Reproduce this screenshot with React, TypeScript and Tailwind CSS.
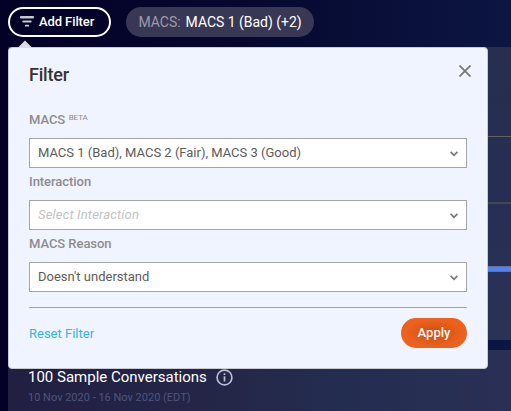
import React from "react";

function Chevron() {
  return (
    <svg width="8" height="6" viewBox="0 0 8 6" className="mt-[2px] shrink-0" fill="none" stroke="#777777" strokeWidth="1.7">
      <path d="M0.6 0.8 4 4.3 7.4 0.8" />
    </svg>
  );
}

type FieldProps = { label: React.ReactNode; children: React.ReactNode };

function Field({ label, children }: FieldProps) {
  return (
    <div className="flex h-[62px] flex-col">
      <div className="flex h-8 items-start pt-[6px] text-[13px] leading-4 font-medium tracking-[-0.05px] text-[#8c8c8e]">{label}</div>
      <div className="flex h-[30px] items-center justify-between border border-[#a2a4a8] bg-white pr-2 pl-2 text-[13px] leading-4 text-[#5c5c5c]">
        {children}
        <Chevron />
      </div>
    </div>
  );
}

function FilterPanel() {
  return (
    <section className="absolute top-[47px] left-2 flex h-[322px] w-[480px] flex-col rounded-[4px] border border-[#c9cbd0] bg-[#f0f4ff] px-5">
      <svg className="absolute -top-[8px] left-[8px]" width="16" height="8" viewBox="0 0 16 8">
        <path d="M.5 8 8 .5 15.5 8Z" fill="#dcdcde" />
      </svg>
      <header className="flex h-[58px] items-start justify-between">
        <h2 className="pt-[17px] text-[18px] leading-5 font-medium tracking-[-0.2px] text-[#333333]">Filter</h2>
        <svg className="mt-[17px] mr-[-4px]" width="12" height="12" viewBox="0 0 12 12" stroke="#777777" strokeWidth="1.8">
          <path d="M.5.5 11.5 11.5M11.5.5.5 11.5" />
        </svg>
      </header>
      <Field
        label={
          <>
            <span>MACS</span>
            <span className="ml-[3.5px] text-[8px] leading-3 font-normal">BETA</span>
          </>
        }
      >
        <span>MACS 1 (Bad), MACS 2 (Fair), MACS 3 (Good)</span>
      </Field>
      <Field label="Interaction">
        <span className="tracking-[0.18px] text-[#c2c2c2] italic">Select Interaction</span>
      </Field>
      <Field label="MACS Reason">
        <span>Doesn't understand</span>
      </Field>
      <footer className="mt-[15px] flex items-start justify-between border-t border-[#a2a4a8] pt-[10px]">
        <span className="pt-[8px] text-[13px] leading-4 text-[#35b5df]">Reset Filter</span>
        <button className="h-[30px] w-[66px] rounded-full bg-[radial-gradient(ellipse_at_center,#c75012_0%,#d95818_30%,#ec611e_62%)] text-[13px] font-medium text-[#fff5ef]">
          Apply
        </button>
      </footer>
    </section>
  );
}

export default function App() {
  return (
    <main className="relative flex h-[411px] w-[511px] flex-col overflow-hidden bg-[linear-gradient(90deg,#030126_0%,#060830_50%,#0c1642_100%)] font-[Roboto,sans-serif]">
      <div className="flex h-[47px] shrink-0 items-start gap-[15px] pt-[7px] pl-2">
        <button className="flex h-[30px] w-[103px] items-center rounded-full border-2 border-white pl-[10px] text-[13px] leading-4 font-medium tracking-[-0.1px] text-white">
          <svg width="14" height="11" viewBox="0 0 14 11" fill="#c8c8d0" className="mt-[-1px] mr-[5px]">
            <rect y="0" width="14" height="2.6" rx="1" />
            <rect x="2.3" y="4.6" width="9.4" height="2" rx="1" />
            <rect x="4.8" y="8.8" width="4.4" height="1.8" rx=".9" />
          </svg>
          Add Filter
        </button>
        <div className="flex h-[30px] w-[188px] items-center gap-[5px] rounded-full bg-[#393854] pl-[12.5px] text-[14px] leading-4 tracking-[-0.03px]">
          <span className="text-[#9c9bad]">MACS:</span>
          <span className="text-white">MACS 1 (Bad) (+2)</span>
        </div>
      </div>
      <section className="ml-2 h-[293px] shrink-0 bg-[linear-gradient(180deg,#272e4e,#262e55_50%,#2a3256)]">
        <div className="h-[90px] border-b border-[#65625e]" />
        <div className="h-[67px] border-b-2 border-[#454657]" />
        <div className="h-[67px] border-b-4 border-[#5084f5] shadow-[inset_0_-1px_0_#6670a0,0_1px_0_#6670a0]" />
      </section>
      <section className="mt-[10px] ml-2 flex flex-1 flex-col bg-[linear-gradient(90deg,#211f42_0%,#252748_45%,#232d50_65%,#2a3055_100%)] pt-[18px] pl-5">
        <div className="flex h-[18px] items-center gap-[9px]">
          <h3 className="text-[15px] leading-[18px] font-normal text-white">100 Sample Conversations</h3>
          <svg width="17" height="17" viewBox="0 0 17 17" fill="none" stroke="#b8bfd5" strokeWidth="1.7">
            <circle cx="8.5" cy="8.5" r="7.4" />
            <path d="M8.5 7.3v5.2M8.5 4.2v1.8" />
          </svg>
        </div>
        <p className="mt-[5px] text-[11px] leading-[14px] text-[#4d557d]">10 Nov 2020 - 16 Nov 2020 (EDT)</p>
      </section>
      <FilterPanel />
    </main>
  );
}
